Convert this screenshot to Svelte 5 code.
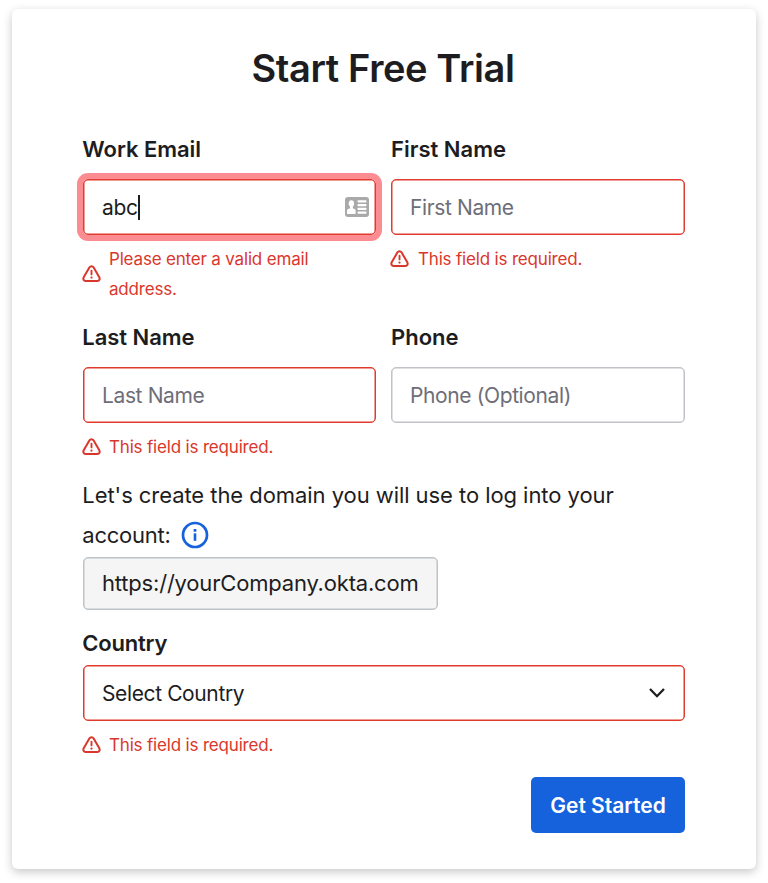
<script>
  let email = $state('abc');
</script>

{#snippet warning()}
  <svg class="warn" width="19" height="18" viewBox="0 0 19 18" fill="none" stroke="currentColor" stroke-linecap="round" stroke-linejoin="round">
    <path d="M7.500 2.300 1.700 12.300C.8 14 1.700 16 3.500 16h12c1.800 0 2.700-2 1.800-3.700L11.500 2.300c-.9-1.500-3.100-1.500-4 0Z" stroke-width="2" />
    <path d="M9.500 5.800v3.600" stroke-width="1.900" />
    <circle cx="9.500" cy="12.600" r="1.150" fill="currentColor" stroke="none" />
  </svg>
{/snippet}

{#snippet error(text)}
  <div class="error">
    {@render warning()}
    <span>{text}</span>
  </div>
{/snippet}

<main class="card">
  <h1>Start Free Trial</h1>

  <form onsubmit={(e) => e.preventDefault()}>
    <div class="row first">
      <div class="field">
        <div class="label">Work Email</div>
        <div class="control invalid focused">
          <span class="value">{email}</span><i class="caret"></i>
          <svg class="contact" width="24" height="20" viewBox="0 0 24 20">
            <rect width="24" height="20" rx="3" fill="#a9a9a9" />
            <g fill="#fff">
              <ellipse cx="6.400" cy="6.600" rx="2.700" ry="3.400" />
              <path d="M5 9h2.800v2.200l2.100 1c.5.3.7.8.7 1.400V17H2v-3.400c0-.6.3-1.100.8-1.400L5 11.200Z" />
              <rect x="12.500" y="3.200" width="9" height="2.200" rx=".8" />
              <rect x="12.500" y="7" width="9" height="2.200" rx=".8" />
              <rect x="12.500" y="10.800" width="9" height="2.200" rx=".8" />
              <rect x="12.500" y="14.600" width="9" height="2.200" rx=".8" />
            </g>
          </svg>
        </div>
        {@render error('Please enter a valid email address.')}
      </div>
      <div class="field right">
        <div class="label">First Name</div>
        <div class="control invalid placeholder">First Name</div>
        {@render error('This field is required.')}
      </div>
    </div>

    <div class="row second">
      <div class="field">
        <div class="label">Last Name</div>
        <div class="control invalid placeholder">Last Name</div>
        {@render error('This field is required.')}
      </div>
      <div class="field right">
        <div class="label">Phone</div>
        <div class="control placeholder">Phone (Optional)</div>
      </div>
    </div>

    <div class="domain-text">
      <div>Let's create the domain you will use to log into your</div>
      <div class="account">
        <span>account:</span>
        <svg width="28" height="28" viewBox="0 0 28 28">
          <circle cx="14" cy="14" r="12" fill="none" stroke="#1662dd" stroke-width="2.700" />
          <rect x="12.700" y="12.300" width="2.600" height="7.500" fill="#1662dd" />
          <rect x="12.600" y="8" width="2.800" height="2.800" rx=".5" fill="#1662dd" />
        </svg>
      </div>
    </div>
    <div class="domain">https://yourCompany.okta.com</div>

    <div class="label country">Country</div>
    <div class="control invalid select">
      <span>Select Country</span>
      <svg width="18" height="12" viewBox="0 0 18 12" fill="none" stroke="#1d1d21" stroke-width="2.300">
        <path d="M2 2l7 7.200L16 2" />
      </svg>
    </div>
    {@render error('This field is required.')}

    <div class="actions"><button type="submit">Get Started</button></div>
  </form>
</main>

<style>
  :global(body) {
    background: #fff;
  }
  :global(#app) {
    display: flow-root;
  }
  .card {
    box-sizing: border-box;
    width: 744px;
    height: 860px;
    margin: 9px 12px 14px;
    padding: 29px 71px 0;
    border-radius: 6px;
    background: #fff;
    box-shadow: 0 3px 10px rgba(0, 0, 0, 0.22);
    color: #1d1d21;
    font-family: Inter, "Liberation Sans", sans-serif;
    font-size: 21px;
  }
  h1 {
    margin: 0 2px 0 0;
    text-align: center;
    font-size: 38px;
    line-height: 60px;
    font-weight: 600;
    letter-spacing: -0.38px;
    white-space: nowrap;
  }
  form {
    margin-top: 36px;
  }
  .row {
    display: grid;
    grid-template-columns: 293px 294px;
    column-gap: 15px;
  }
  .first {
    height: 188px;
  }
  .second {
    height: 153px;
  }
  .label {
    margin-bottom: 15px;
    line-height: 30px;
    font-size: 22px;
    font-weight: 600;
    letter-spacing: -0.05px;
    text-indent: -0.7px;
    white-space: nowrap;
  }
  .right .label {
    letter-spacing: 0;
    text-indent: 0;
  }
  .control {
    --line: #c1c1c8;
    display: flex;
    align-items: center;
    box-sizing: border-box;
    height: 56px;
    padding: 0 18px;
    border: 1px solid var(--line);
    border-radius: 5px;
    box-shadow: inset 0 0 0 0.5px var(--line);
    letter-spacing: -0.38px;
    white-space: nowrap;
  }
  .invalid {
    --line: #e13a2e;
  }
  .placeholder {
    color: #6e6e78;
  }
  .focused {
    padding-right: 6px;
    box-shadow: inset 0 0 0 0.5px var(--line), 0 0 0 6px #fb8d92;
  }
  .caret {
    width: 2px;
    height: 25px;
    background: #1d1d21;
  }
  .contact {
    margin-left: auto;
  }
  .error {
    display: flex;
    align-items: center;
    margin-top: 9px;
    margin-left: -1px;
    color: #da372c;
    font-size: 17px;
    line-height: 30px;
    letter-spacing: -0.18px;
  }
  .error span {
    width: 215px;
  }
  .warn {
    flex: none;
    margin-right: 8px;
  }
  .right .warn {
    margin-right: 9px;
  }
  .domain-text {
    font-size: 22px;
    line-height: 40px;
    letter-spacing: -0.06px;
    text-indent: -0.7px;
    white-space: nowrap;
  }
  .account {
    display: flex;
    align-items: center;
    gap: 10px;
    letter-spacing: -0.25px;
  }
  .domain {
    box-sizing: border-box;
    width: 355px;
    height: 53px;
    margin-top: 2px;
    padding-left: 18px;
    border: 1px solid #bec3c8;
    border-radius: 5px;
    box-shadow: inset 0 0 0 0.5px #bec3c8;
    background: #f5f5f6;
    font-size: 22px;
    line-height: 51px;
    letter-spacing: -0.19px;
    white-space: nowrap;
  }
  .country {
    margin: 18px 0 7px;
    letter-spacing: -0.2px;
  }
  .select {
    justify-content: space-between;
  }
  .actions {
    display: flex;
    justify-content: flex-end;
    margin-top: 17px;
  }
  button {
    width: 154px;
    height: 56px;
    padding: 0;
    border: 0;
    border-radius: 5px;
    background: #1662dd;
    color: #fff;
    font: 600 21px Inter, "Liberation Sans", sans-serif;
    white-space: nowrap;
  }
</style>
